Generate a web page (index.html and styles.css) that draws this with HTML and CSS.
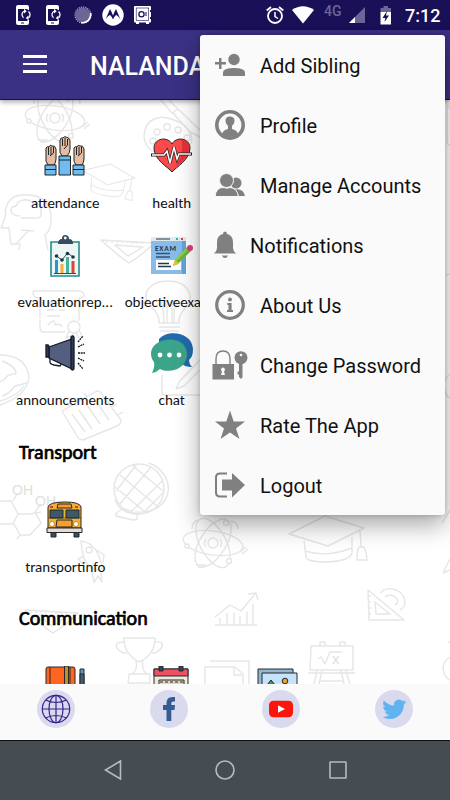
FILE: index.html
```
<!DOCTYPE html>
<html lang="en">
<head>
    <meta charset="UTF-8">
    <meta name="viewport" content="width=device-width, initial-scale=1.0">
    <title>Nalanda</title>
    <link rel="stylesheet" href="styles.css">
</head>
<body>
    <!-- status bar -->
    <div class="status">
        <div class="status-left">
            <svg width="16" height="20" viewBox="0 0 16 20">
                <g id="phone">
                    <path d="M2 0H11Q13 0 13 2V5H11.500V4H2V16H11.500V15H13V18Q13 20 11 20H2Q0 20 0 18V2Q0 0 2 0Z" fill="#fff"/>
                    <path d="M5 18H8" stroke="#1a1058"/>
                    <path d="M7.500 12.800A4 4 0 0 1 8 6.200M12.500 6.500A4 4 0 0 1 12.500 12.800" fill="none" stroke="#fff" stroke-width="1.300"/>
                    <path d="M8 3.800L10.700 6.200L8 8.500ZM12.500 10.500L9.800 13L12.500 15.300Z" fill="#fff"/>
                </g>
            </svg>
            <svg width="16" height="20" viewBox="0 0 16 20"><use href="#phone"/></svg>
            <svg class="spinner" width="18" height="18" viewBox="0 0 18 18">
                <circle cx="9" cy="9" r="7.500" fill="#6b6598"/>
                <circle cx="9" cy="9" r="8" fill="none" stroke="#aaa6c5" stroke-width="1.200" stroke-dasharray="1.200 1"/>
                <path d="M16.500 7A8 8 0 0 1 7 16.500" fill="none" stroke="#fff" stroke-width="1.600"/>
            </svg>
            <svg class="moto" width="22" height="22" viewBox="0 0 22 22">
                <circle cx="11" cy="11" r="10.700" fill="#fff"/>
                <path d="M3.500 15.500L8 5Q9.500 7.500 11 11.500Q12.500 7.500 14 5L18.500 15.500Q16 11.500 14 11Q12 12.500 11 15.500Q10 12.500 8 11Q6 11.500 3.500 15.500Z" fill="#1a1058"/>
            </svg>
            <svg class="safe" width="18" height="20" viewBox="0 0 18 20">
                <rect x="0" y="1" width="17" height="16.500" rx="1" fill="#fff"/>
                <path d="M2 17V19H5V17M12 17V19H15V17" fill="#fff"/>
                <rect x="2.200" y="3" width="12.500" height="12.300" fill="none" stroke="#1a1058" stroke-width=".6"/>
                <circle cx="7.500" cy="9.300" r="2.600" fill="none" stroke="#1a1058" stroke-width="1.300"/>
                <path d="M12 7V11M16.500 5V7M16.500 12V14" stroke="#1a1058"/>
            </svg>
        </div>
        <div class="status-right">
            <svg class="alarm" width="18" height="18" viewBox="0 0 18 18" fill="none" stroke="#fff" stroke-width="1.800">
                <circle cx="9" cy="10" r="7"/><path d="M9 6V10.500L12 12.500" stroke-width="1.500"/><path d="M.7 4.500L5 1M13 1L17.300 4.500"/>
            </svg>
            <svg class="wifi" width="22" height="18" viewBox="0 0 22 18"><path d="M0 4Q11 -3.500 22 4L11 17.500Z" fill="#fff"/></svg>
            <span class="lte">4G</span>
            <svg class="signal" width="16" height="16" viewBox="0 0 16 16"><path d="M16 0V16H0Z" fill="#6b6598"/><path d="M6 10V16H0Z" fill="#fff"/></svg>
            <svg class="battery" width="12" height="19" viewBox="0 0 12 19">
                <path d="M3.500 0H8V2H11V6H.5V2H3.500Z" fill="#6b6598"/><path d="M.5 6H11V18.500H.5Z" fill="#fff"/>
                <path d="M7 5L2.500 12H5.300L4.500 16L9 9.500H6Z" fill="#1a1058"/>
            </svg>
            <span class="time">7:12</span>
        </div>
    </div>

    <header>
        <div class="burger"><i></i><i></i><i></i></div>
        <h1>NALANDA</h1>
    </header>

    <main>
        <!-- school doodles behind the tiles -->
        <svg class="doodles" width="450" height="584" viewBox="0 100 450 584">
            <defs>
                <g id="atom">
                    <ellipse rx="30" ry="12" transform="rotate(8)"/><ellipse rx="27" ry="13" transform="rotate(62)"/><ellipse rx="27" ry="13" transform="rotate(-58)"/>
                    <circle r="5"/><path d="M-7 -4Q-10 0 -7 4M7 -4Q10 0 7 4M-21 -14Q-21 -22 -14 -23M25 -14Q25 -21 18 -22M27 9L33 4M29 11L35 6M-17 22H-7M-15 24H-9"/>
                    <circle class="hole" cx="-26" cy="3" r="2"/><circle class="hole" cx="13" cy="-20" r="2.500"/><circle class="hole" cx="16" cy="18" r="2.500"/>
                </g>
                <g id="cap">
                    <path d="M-38 -11L-2 -29L37 -17L1 1ZM-23 -4L-21 12Q-20 17 0 17Q23 16 25 8V-8M-22 6Q0 13 25 3M33 -14L34 2"/>
                    <path d="M32 2H37Q40 9 40 15L30 15Q30 5 32 2"/>
                </g>
                <g id="ruler"><path d="M-26 -8L27 -5Q18 5 2 15Q-5 11 -26 -8ZM-12 -3L16 -1L1 8ZM-20 -7V-5M-15 -7V-5M-10 -7V-5M-5 -7V-5M0 -7V-5M5 -6V-4M10 -6V-4M15 -6V-4"/></g>
            </defs>
            <use href="#atom" x="55" y="118"/>
            <g transform="translate(107 184) rotate(13) scale(.7)"><use href="#cap"/></g>
            <path d="M144 136C145 118 160 114 174 120C188 124 194 136 191 144C183 149 172 140 168 147C162 158 145 152 144 136Z"/>
            <circle cx="157" cy="132" r="3"/><circle cx="167" cy="127" r="3.200"/><circle cx="178" cy="130" r="3"/><circle cx="153" cy="141" r="3"/><circle cx="187" cy="138" r="3"/>
            <path d="M161 100L172 113L178 109L169 100M173 113L190 132L200 137M178 109L200 130"/>
            <path d="M1 228Q8 210 5 212Q8 194 25 195Q48 194 51 215Q52 230 45 235L48 250M1 228H9L11 244H20L19 250M20 216Q8 215 12 207Q17 207 18 202Q27 197 33 203Q43 204 41 213Q42 219 34 218H21M28 231L16 244M21 230L34 231"/>
            <use href="#ruler" x="127" y="248"/>
            <path d="M40 319V298Q32 298 33 291H77Q84 290 84 296Q82 298 79 298V321M40 320Q39 332 43 332H65M47 303H67M47 310H55M59 310H65M47 316H60M48 325Q55 317 55 325Q60 323 62 327"/><circle cx="74" cy="327" r="6"/><path d="M69 331L66 338L72 336L74 332M76 332L79 338L82 336L79 330"/>
            <path d="M159 323Q160 315 151 306C139 294 150 281 168 281C187 281 196 295 186 307Q178 316 179 323ZM164 323L163 306Q160 302 163 300Q168 300 167 307V323M172 323V307Q172 300 176 301Q179 305 174 309L174 323M159 327H180M160 331H179M164 335H176"/>
            <path d="M0 355Q26 355 29 377Q27 396 0 405M2 361Q16 366 16 374Q7 374 5 379L0 382M27 383L15 386Q8 395 2 396M0 401Q18 396 24 386"/>
            <path d="M62 411L97 391Q101 391 103 396L121 420Q121 424 117 426L83 440Q79 440 77 436ZM70 407L67 403M78 402L75 398M87 397L84 393M72 414L85 432M79 410L92 429M87 405L100 424M96 401L109 420M112 407L117 404M118 415L123 412"/>
            <path d="M162 375V395H200M179 382L200 360M179 382L176 389L184 386L200 370"/>
            <circle cx="139" cy="489" r="25"/><path d="M149 463C178 474 175 515 135 512M115 500Q121 515 140 514M120 475L157 506M132 465L163 491M115 487L145 512M119 505L151 467M116 491L137 464M131 512L163 480M143 513L164 492M122 509Q128 508 137 515Q139 520 133 520L116 516Q114 514 122 509Z"/>
            <path d="M0 501H11L18 514L13 524H0M18 514H30L41 512M14 524L20 535L17 539M20 535L30 535L41 523L35 512M13 501L18 493M35 512L41 504"/>
            <text x="12" y="495" font-size="14">OH</text><text x="35" y="506" font-size="14">OH</text>
            <path d="M81 541Q95 543 100 559L103 568L99 571L90 567Q82 560 81 541ZM84 556L78 559L84 565M97 550L104 555L103 563M92 572L94 582L98 576L102 582L101 572"/><circle cx="89" cy="550" r="3"/>
            <use href="#atom" x="213" y="543"/><use href="#cap" x="327" y="545"/>
            <path d="M215 617L230 605L241 611L256 593M248 594L256 593L258 600M215 625H257M220 625V618M227 625V613M234 625V613M240 625V616M247 625V612M253 625V604"/>
            <path d="M368 590L404 620H369ZM375 602L390 614H376ZM380 593C388 584 405 590 405 603Q405 607 400 610M385 597Q391 592 397 599Q399 603 395 605M368 596H371M368 602H371M368 608H371M368 614H371"/>
            <use href="#ruler" x="51" y="618"/>
            <path d="M124 638H155Q155 654 141 661L139 662Q124 654 124 638ZM124 642Q114 642 117 648Q122 654 127 653M155 642Q164 641 162 647Q157 654 152 653M136 661Q138 670 132 674M143 661Q141 670 147 674M129 674H150V683H128Z"/>
            <path d="M210 661H249V684M205 684V667H235L243 674V684M234 667V675H242"/>
            <path d="M311 646H353V670H310ZM320 646V642H325V646M340 646V642H345V646M308 673H355M317 671L314 684M322 671L319 684M341 671L344 684M346 671L350 684M320 681H343M318 659L321 657L325 664L330 652H342"/>
            <text x="332" y="664" font-size="15">x</text>
            <path d="M447 105Q450 105 450 110M447 105V141Q447 145 450 145M446 275L450 274M450 374Q444 378 444 388Q446 397 450 398M442 523L450 510M443 573L450 559M443 573L450 570M450 642H448M450 657Q443 661 443 669Q444 677 450 680"/>
        </svg>

        <section class="tiles">
            <div class="tile">
                <svg width="42" height="42" viewBox="0 0 42 42" stroke="#222" stroke-width="1">
                    <g id="hand"><path d="M2 20V12Q3 10 5 11Q6 8 8 10Q11 9 12 13V23Q12 26 10 29H4Q1 26 2 20Z" fill="#e3bda4"/><path d="M4.500 11V19M7 11V19M9.500 11V17L6 20" fill="none"/><path d="M1 29H12V39H1Z" fill="#6ebcf0"/><path d="M1 33.500H12" fill="none"/></g>
                    <use href="#hand" x="28"/>
                    <path d="M16 11V4Q17 1 19 2Q20 0 22 1Q25 1 26 5V13Q26 17 23 20H18Q15 17 16 11Z" fill="#e3bda4"/><path d="M18.500 3V10M21 2V10M23.500 3V9L20 13" fill="none"/><path d="M15 20H26.500V39H15Z" fill="#6ebcf0"/><path d="M15 24H26" fill="none"/>
                </svg>
                <span>attendance</span>
            </div>
            <div class="tile">
                <svg width="42" height="42" viewBox="0 0 42 42">
                    <path d="M21 36C17 31 3 24 3 12C3 2 17 0 21 8C25 0 39 2 39 12C39 24 25 31 21 36Z" fill="#fb4a4b" stroke="#292929"/>
                    <path d="M30 4Q38 4 38 13Q37 22 24 31Q31 22 31 14Q32 7 30 4" fill="#e62f39"/>
                    <path d="M0 19H13L16 15L19 27L23 11L26 23L28 18H41" fill="none" stroke="#222" stroke-width="3"/><path d="M1 19H13L16 15L19 27L23 11L26 23L28 18H40" fill="none" stroke="#fff" stroke-width="1.500"/>
                </svg>
                <span>health</span>
            </div>
            <div class="tile"></div>
            <div class="tile"></div>

            <div class="tile">
                <svg width="42" height="42" viewBox="0 0 42 42">
                    <path d="M7 7H35V41H7Z" fill="#eef5f5" stroke="#238c87" stroke-width="1.600"/><path d="M14 9Q14 4 18 4Q18 0 21 0Q25 0 25 4Q29 4 29 9Z" fill="#344c60"/><circle cx="21.300" cy="3" r="1.400" fill="#fff"/>
                    <path d="M12.500 25V38" stroke="#2394dc" stroke-width="3"/><path d="M18 29V38" stroke="#f5ad36" stroke-width="3"/><path d="M23.500 22V38" stroke="#3fb69b" stroke-width="3"/><path d="M29 26V38" stroke="#d44835" stroke-width="3"/>
                    <path d="M12.500 21L18 25L23.500 18L29 22M10 38.500H32" fill="none" stroke="#344c60"/><g fill="#1e3440"><circle cx="12.500" cy="21" r="1.800"/><circle cx="18" cy="25" r="1.800"/><circle cx="23.500" cy="18.500" r="1.800"/><circle cx="29" cy="22" r="1.800"/></g>
                </svg>
                <span>evaluationrep...</span>
            </div>
            <div class="tile">
                <svg width="44" height="42" viewBox="0 0 44 42">
                    <path d="M1 2H36V39H1Z" fill="#89bce9"/><path d="M32 6H36V39H32Z" fill="#63a4dd"/><path d="M1 2H36V6H1Z" fill="#e3e9f0"/><path d="M6 4H20" stroke="#203b50"/><path d="M26 4H28" stroke="#39b0bb" stroke-width="2"/><path d="M31 4H33" stroke="#e33d48" stroke-width="2"/>
                    <text x="5" y="16" font-size="7.500" font-weight="700" fill="#26394b" textLength="21">EXAM</text>
                    <path d="M6 18.500H20M6 22H20" stroke="#315374" stroke-width="1.500"/><path d="M6 25H31V35H6Z" fill="#fff"/><path d="M8 28.500H19M8 31.500H21" stroke="#26394b" stroke-width="1.300"/>
                    <path d="M23 31L25 25L37 12L41 16L28 29Z" fill="#70b344"/><path d="M26 25L37 14" stroke="#8ed14e" stroke-width="2"/><path d="M23 31L25 25L29 28Z" fill="#edc22e"/><circle cx="40" cy="13" r="3" fill="#df3d80"/>
                </svg>
                <span>objectiveexams</span>
            </div>
            <div class="tile"></div>
            <div class="tile"></div>

            <div class="tile">
                <svg width="42" height="42" viewBox="0 0 42 42" stroke="#161929" stroke-width="1.300">
                    <path d="M6 25V29Q6 31 10 32L16 33Q18 31 17 28" fill="#fff"/><path d="M5 14L28 6V36L5 25Z" fill="#545f80"/><path d="M2 12H4Q5 12 5 14V24H2Z" fill="#303a55"/><rect x="27" y="3" width="3" height="34" rx="1.500" fill="#303a55"/>
                    <path d="M34 9L39 3M34 14L40 11M34 20H41M34 25L40 28M34 30L39 36" stroke-dasharray="2 .7" fill="none"/>
                </svg>
                <span>announcements</span>
            </div>
            <div class="tile">
                <svg width="44" height="42" viewBox="0 0 44 42">
                    <path d="M9 6C18 -4 42 -1 43 16Q43 24 39 27Q39 31 42 34Q35 34 32 31L9 10Z" fill="#226bad"/>
                    <path d="M4 29Q1 26 1 20C2 4 35 0 37 20C38 36 19 41 10 36Q7 39 2 40Q5 34 4 29Z" fill="#3ca589"/><g fill="#fff"><circle cx="10" cy="22" r="2.400"/><circle cx="19.500" cy="22" r="2.400"/><circle cx="29" cy="22" r="2.400"/></g>
                </svg>
                <span>chat</span>
            </div>
        </section>

        <h2>Transport</h2>
        <section class="tiles">
            <div class="tile">
                <svg width="42" height="42" viewBox="0 0 42 42" stroke="#292929">
                    <path d="M7 31H12V37H7ZM30 31H35V37H30Z" fill="#314f68"/><path d="M4 28V7Q5 2 21 2Q36 2 37 7V28Z" fill="#efb235"/><path d="M6 10H19V18H6ZM22 10H35V18H22Z" fill="#3d5969"/><path d="M14 4H27L28 8H13ZM13 20H28V27H12Z" fill="#f5a02e"/><path d="M4 18H37" stroke-width=".6"/><circle cx="8" cy="24" r="2.500" fill="#fff" stroke="#c9872c"/><circle cx="32" cy="24" r="2.500" fill="#fff" stroke="#c9872c"/><path d="M3 28H38V32.500H3Z" fill="#e5dbd2"/><path d="M6 7H9M31 7H34" stroke="#cf3e39" stroke-width="2"/>
                </svg>
                <span>transportinfo</span>
            </div>
        </section>

        <h2>Communication</h2>
        <section class="tiles">
            <div class="tile">
                <svg width="42" height="42" viewBox="0 0 42 42" stroke="#292929">
                    <rect x="2" y="1" width="29" height="38" rx="2" fill="#ff651e"/><path d="M6 1V39M26 1V39" fill="none"/><path d="M20.500 0H24.500V39H20.500Z" fill="#ba922d"/><path d="M36 3H40V30H36Z" fill="#4c9bcf"/><path d="M36 8H40V30H36Z" fill="#405d73"/>
                </svg>
            </div>
            <div class="tile">
                <svg width="42" height="42" viewBox="0 0 42 42" stroke="#292929">
                    <path d="M3 3H37V38H3Z" fill="#f1eadc"/><path d="M3 3H37V10H3Z" fill="#ed5262"/><path d="M8 0H12V5H8ZM28 0H32V5H28Z" fill="#344259"/><path d="M8 14H33V30H8Z" fill="#e0d7c2"/><path d="M9 16H32" stroke-dasharray="3 2" fill="none"/>
                </svg>
            </div>
            <div class="tile">
                <svg width="42" height="42" viewBox="0 0 42 42" stroke="#292929">
                    <path d="M1 3H36V35H1Z" fill="#91b8d1"/><path d="M5 7H40V38H5Z" fill="#c5e3fa"/><circle cx="28" cy="15" r="2.800" fill="#e3a91e"/><path d="M6 24L14 14L23 25Z" fill="#2d9c5c"/>
                </svg>
            </div>
        </section>
    </main>

    <!-- social links -->
    <footer>
        <a><svg width="38" height="38" viewBox="0 0 38 38" fill="none" stroke="#35238c" stroke-width="1.200"><circle cx="19" cy="19" r="13.700"/><ellipse cx="19" cy="19" rx="7" ry="13.700"/><path d="M19 5V33M5.300 19H32.700M8.500 10Q19 15 29.500 10M8.500 28Q19 23 29.500 28"/></svg></a>
        <a><svg width="38" height="38" viewBox="0 0 38 38"><path d="M16.500 31V20H13V15H16.500V13Q16.500 7 22.500 7H25V11.500H23Q21.300 11.500 21.300 13.500V15H25L24.500 20H21.300V31Z" fill="#335c94"/></svg></a>
        <a><svg width="38" height="38" viewBox="0 0 38 38"><rect x="7" y="10.700" width="24" height="16.600" rx="4.500" fill="#fb150c"/><path d="M16 15.300L23 19L16 22.700Z" fill="#fff"/></svg></a>
        <a><svg width="38" height="38" viewBox="0 0 38 38"><path transform="translate(7.300 7.300)" d="M23.950 4.570a10 10 0 0 1-2.820.770 4.960 4.960 0 0 0 2.160-2.720 9.900 9.900 0 0 1-3.130 1.190A4.920 4.920 0 0 0 11.780 8.290C7.690 8.100 4.070 6.130 1.640 3.160a4.930 4.930 0 0 0 1.520 6.570 4.900 4.900 0 0 1-2.230-.61v.060a4.920 4.920 0 0 0 3.950 4.830 5 5 0 0 1-2.210.080 4.940 4.940 0 0 0 4.600 3.420A9.870 9.870 0 0 1 0 19.540a14 14 0 0 0 7.550 2.210c9.050 0 14-7.500 14-13.980q0-.320-.020-.630A9.940 9.940 0 0 0 24 4.590z" fill="#5fb4f0"/></svg></a>
    </footer>
    <nav>
        <svg width="20" height="20" viewBox="0 0 20 20"><path d="M17.500 1V19L2.500 10Z"/></svg>
        <svg width="20" height="20" viewBox="0 0 20 20"><circle cx="10" cy="10" r="9"/></svg>
        <svg width="20" height="20" viewBox="0 0 20 20"><rect x="2" y="2" width="16" height="16" rx=".5"/></svg>
    </nav>

    <!-- overflow menu -->
    <div class="menu">
        <div class="item"><svg width="30" height="30" viewBox="0 0 30 30"><circle cx="19" cy="9.500" r="5.700"/><path d="M8 26V22.500Q8 18 19 18Q30 18 30 22.500V26Z"/><path d="M0 12H4V8H6.500V12H11V14.500H6.500V19H4V14.500H0Z"/></svg><span>Add Sibling</span></div>
        <div class="item"><svg width="30" height="30" viewBox="0 0 30 30"><circle cx="15" cy="15" r="13.200" fill="none" stroke="#808080" stroke-width="3.600"/><path d="M7 24Q8 20 13 19V16Q10 13 10.500 10Q11 6.500 15 6.500Q19 6.500 19.500 10Q20 13 17 16V19Q22 20 23 24Q20 27 15 27Q10 27 7 24Z"/></svg><span>Profile</span></div>
        <div class="item"><svg width="30" height="30" viewBox="0 0 30 30"><circle cx="21" cy="13" r="5.500"/><path d="M18 20Q28 17 30 26H24Z"/><g stroke="#fafafa"><circle cx="11.500" cy="10.500" r="7"/><path d="M0 26.500Q1 17 9 17.500Q11.500 19 15 17.500Q22 18 23.500 26.500Z"/></g></svg><span>Manage Accounts</span></div>
        <div class="item short"><svg width="24" height="30" viewBox="0 0 24 30"><path d="M10 4Q10 1.500 12 1.500Q14 1.500 14 4Q20 5.500 20 12V18Q20 21 23 23.500H1Q4 21 4 18V12Q4 5.500 10 4ZM9 25.500H15Q14 28 12 28Q10 28 9 25.500Z"/></svg><span>Notifications</span></div>
        <div class="item"><svg width="30" height="30" viewBox="0 0 30 30"><circle cx="15" cy="15" r="13.300" fill="none" stroke="#808080" stroke-width="3.200"/><circle cx="15" cy="9.500" r="1.900"/><path d="M12.300 13H16.600V20H18V22H12V20H13.500V15H12.300Z"/></svg><span>About Us</span></div>
        <div class="item"><svg class="wide" width="36" height="30" viewBox="0 0 36 30"><path d="M4 14V9Q4 1 11 1Q18 1 18 9V14" fill="none" stroke="#808080" stroke-width="1.400"/><path d="M.5 14H22V29.500H.5Z"/><path d="M11 17.500A2.200 2.200 0 0 1 12 21.500L13 25H9L10 21.500A2.200 2.200 0 0 1 11 17.500Z" fill="#fafafa"/><circle cx="29" cy="7.700" r="6.500"/><path d="M27 13H30.500V27L29 29L27 27V25L25.500 24V22L27 21Z"/><circle cx="29" cy="5" r="1.300" fill="#fafafa"/></svg><span>Change Password</span></div>
        <div class="item"><svg width="30" height="30" viewBox="0 0 30 30"><path d="M15 .5L18.700 11.500H30L21 18.500L24.500 29L15 22.500L5.500 29L9 18.500L0 11.500H11.300Z"/></svg><span>Rate The App</span></div>
        <div class="item"><svg width="30" height="30" viewBox="0 0 30 30"><path d="M12 3.500H5Q1 3.500 1 7.500V22.500Q1 26.500 5 26.500H12" fill="none" stroke="#808080" stroke-width="2"/><path d="M7 9.500H17V3L30 15L17 27.500V20.500H7Z"/></svg><span>Logout</span></div>
    </div>
</body>
</html>
```
FILE: styles.css
```
* {
    box-sizing: border-box;
}
body {
    margin: 0;
    width: 450px;
    height: 800px;
    display: flex;
    flex-direction: column;
    position: relative;
    overflow: hidden;
    background-color: #fff;
    font-family: Roboto, sans-serif;
}
svg {
    display: block;
    flex: none;
}
.status {
    height: 30px;
    padding: 0 10px 0 16px;
    display: flex;
    justify-content: space-between;
    align-items: center;
    background-color: #1a1058;
    color: #fff;
}
.status-left, .status-right {
    display: flex;
    align-items: center;
}
.status-left {
    gap: 14px;
}
.spinner {
    margin-left: -2px;
}
.moto {
    margin-left: -4px;
}
.safe {
    margin-left: -4px;
}
.wifi {
    margin-left: 8px;
}
.lte {
    width: 19px;
    margin: -8px 0 0 10px;
    font-size: 14px;
    font-weight: 500;
    color: #6b6598;
}
.signal {
    margin-left: 6px;
}
.battery {
    margin: 0 13px 0 15px;
}
.time {
    width: 35px;
    font-size: 18px;
    font-weight: 500;
    white-space: nowrap;
}
header {
    height: 70px;
    padding: 2px 0 0 23px;
    display: flex;
    align-items: center;
    gap: 43px;
    background-color: #3b3184;
    border-bottom: 1px solid #150c66;
    box-shadow: 0 2px 5px rgba(0, 0, 0, .35);
    z-index: 1;
}
.burger {
    width: 24px;
    display: flex;
    flex-direction: column;
    gap: 5px;
    margin-top: -3px;
}
.burger i {
    height: 2.5px;
    background-color: #fff;
}
h1 {
    margin: 2px 0 0;
    font-size: 25px;
    font-weight: 500;
    color: #fff;
}
main {
    height: 584px;
    padding: 34px 0 0 12px;
    position: relative;
    overflow: hidden;
    font-family: Carlito, Lato, sans-serif;
}
.doodles {
    position: absolute;
    left: 0;
    top: 0;
    fill: none;
    stroke: #e6e6e6;
    stroke-width: 1.4;
    stroke-linejoin: round;
}
.doodles text {
    fill: #e0e0e0;
    stroke: none;
    font-family: "Liberation Sans", sans-serif;
}
.hole {
    fill: #fff;
}
.tiles {
    position: relative;
    display: grid;
    grid-template-columns: repeat(4, 106.5px);
    grid-auto-rows: 98.5px;
}
.tile {
    display: flex;
    flex-direction: column;
    align-items: center;
    gap: 16px;
    padding-top: 2px;
    font-size: 15px;
    line-height: 18px;
    color: #111;
    white-space: nowrap;
}
h2 {
    position: relative;
    margin: 10px 7px 34px;
    font-size: 20px;
    line-height: 24px;
    font-weight: 400;
    -webkit-text-stroke: .7px #000;
    color: #000;
}
footer {
    height: 57px;
    padding: 6px 37px 0;
    display: flex;
    justify-content: space-between;
    background-color: #fafafa;
    border-bottom: 1px solid #111;
    z-index: 1;
}
footer a {
    width: 38px;
    height: 38px;
    border-radius: 50%;
    background-color: #d9daee;
}
nav {
    height: 59px;
    padding-bottom: 1px;
    display: flex;
    justify-content: center;
    align-items: center;
    gap: 92.5px;
    background-color: #454d52;
}
nav svg {
    fill: none;
    stroke: #b8bbbd;
    stroke-width: 1.6;
}
.menu {
    position: absolute;
    left: 200px;
    top: 35px;
    width: 245px;
    height: 480px;
    border-radius: 3px;
    background-color: #fafafa;
    box-shadow: 0 10px 24px rgba(0, 0, 0, .35), 0 0 5px rgba(0, 0, 0, .2);
    z-index: 2;
}
.item {
    height: 60px;
    padding-left: 15px;
    display: flex;
    align-items: center;
    gap: 15px;
    font-size: 20px;
    color: #111;
    white-space: nowrap;
}
.item span {
    padding-top: 2px;
}
.item svg {
    fill: #808080;
}
.item .wide {
    margin: 0 -3px;
}
.short {
    padding-left: 13px;
    gap: 13px;
}
```
